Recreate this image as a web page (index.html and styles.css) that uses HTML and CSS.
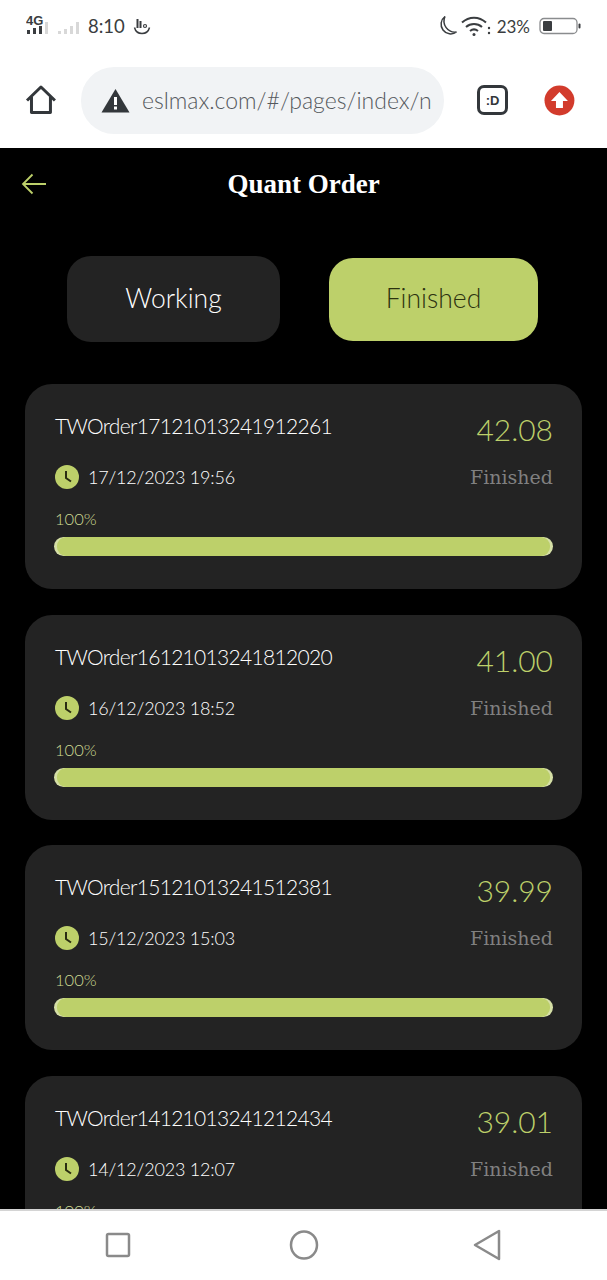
FILE: index.html
```html
<!DOCTYPE html>
<html lang="en">
<head>
    <meta charset="UTF-8">
    <meta name="viewport" content="width=device-width, initial-scale=1.0">
    <title>Quant Order</title>
    <link rel="stylesheet" href="styles.css">
</head>
<body>
    <div class="phone">
        <div class="status-bar">
            <div class="status-left">
                <svg class="signal" width="56" height="26" viewBox="0 0 56 26">
                    <text x="0" y="12" class="signal-label">4G</text>
                    <g fill="#3a3d40">
                        <rect x="1" y="17" width="3" height="4"/>
                        <rect x="7" y="15" width="3" height="6"/>
                        <rect x="13" y="13" width="3" height="8"/>
                    </g>
                    <g fill="#d8d8d8">
                        <rect x="19" y="9" width="3" height="12"/>
                        <rect x="32" y="18" width="3" height="3"/>
                        <rect x="38" y="16" width="3" height="5"/>
                        <rect x="44" y="13" width="3" height="8"/>
                        <rect x="50" y="9" width="3" height="12"/>
                    </g>
                </svg>
                <span class="clock">8:10</span>
                <svg width="18" height="18" viewBox="0 0 18 18" fill="none" stroke="#3a3d40">
                    <path d="M1.500 10.500c1 4 4 6 7.500 6s6.500-2 7.500-6" stroke-width="1.500"/>
                    <path d="M4.500 2v9M7.500 4v7" stroke-width="2"/>
                    <circle cx="12" cy="9" r="1.500" stroke-width="1.200"/>
                </svg>
            </div>
            <div class="status-right">
                <svg width="22" height="24" viewBox="0 0 22 24" fill="none" stroke="#3a3d40" stroke-width="1.500">
                    <path d="M9 2.500a9.500 9.500 0 1 0 11.500 15.500A11 11 0 0 1 9 2.500z"/>
                </svg>
                <svg width="30" height="22" viewBox="0 0 30 22" fill="none" stroke="#3a3d40" stroke-width="2">
                    <path d="M1 7.500c7-6.500 17-6.500 24 0"/>
                    <path d="M5 12c4.500-4 11.500-4 16 0"/>
                    <path d="M9 16c2.500-2 5.500-2 8 0"/>
                    <circle cx="13" cy="19.500" r="1.500" fill="#3a3d40" stroke="none"/>
                    <circle cx="28" cy="13" r="1.200" fill="#3a3d40" stroke="none"/>
                    <circle cx="28" cy="18" r="1.200" fill="#3a3d40" stroke="none"/>
                </svg>
                <span class="battery-text">23%</span>
                <svg width="42" height="18" viewBox="0 0 42 18">
                    <rect x="1" y="1.500" width="37" height="15" rx="4" fill="none" stroke="#8a8c8e" stroke-width="1.300"/>
                    <rect x="4" y="4" width="9" height="10" rx="1" fill="#3a3d40"/>
                    <rect x="39.500" y="6.500" width="2" height="5" rx="1" fill="#3a3d40"/>
                </svg>
            </div>
        </div>

        <div class="browser-bar">
            <svg class="home-icon" width="32" height="32" viewBox="0 0 32 32" fill="none" stroke="#33373b" stroke-width="3" stroke-linejoin="round">
                <path d="M2 16.500 16 3l14 13.500M6.500 13v15.500h19V13"/>
            </svg>
            <div class="url-pill">
                <svg width="29" height="25" viewBox="0 0 29 25">
                    <path d="M14.500 1 28.500 24.500H.5z" fill="#33373b"/>
                    <rect x="13" y="9" width="3" height="8" fill="#fff"/>
                    <rect x="13" y="18.500" width="3" height="3" fill="#fff"/>
                </svg>
                <span class="url-text">eslmax.com/#/pages/index/n</span>
            </div>
            <div class="tab-count">:D</div>
            <svg class="update-icon" width="31" height="31" viewBox="0 0 31 31">
                <circle cx="15.500" cy="15.500" r="15" fill="#d23b2c"/>
                <path d="M15.500 7 24 16h-5v7h-7v-7H7z" fill="#fff"/>
            </svg>
        </div>

        <main class="page">
            <header class="page-header">
                <svg class="back-icon" width="26" height="22" viewBox="0 0 26 22" fill="none" stroke="#bdd06a" stroke-width="1.800">
                    <path d="M25 11H2M11.500 1.500 2 11l9.500 9.500"/>
                </svg>
                <h1>Quant Order</h1>
            </header>

            <div class="tabs">
                <div class="tab">Working</div>
                <div class="tab tab-active">Finished</div>
            </div>

            <div class="order-list">
                <section class="order-card">
                    <div class="order-top">
                        <span class="order-id">TWOrder17121013241912261</span>
                        <span class="order-amount">42.08</span>
                    </div>
                    <div class="order-mid">
                        <span class="order-date">
                            <svg class="clock-icon" width="24" height="24" viewBox="0 0 24 24"><circle cx="12" cy="12" r="12" fill="#bdd06a"/><path d="M11 6v7l5 3.500" fill="none" stroke="#2a2d12" stroke-width="2"/></svg>
                            17/12/2023 19:56
                        </span>
                        <span class="order-status">Finished</span>
                    </div>
                    <div class="order-percent">100%</div>
                    <div class="progress"><div class="progress-fill"></div></div>
                </section>

                <section class="order-card">
                    <div class="order-top">
                        <span class="order-id">TWOrder16121013241812020</span>
                        <span class="order-amount">41.00</span>
                    </div>
                    <div class="order-mid">
                        <span class="order-date">
                            <svg class="clock-icon" width="24" height="24" viewBox="0 0 24 24"><circle cx="12" cy="12" r="12" fill="#bdd06a"/><path d="M11 6v7l5 3.500" fill="none" stroke="#2a2d12" stroke-width="2"/></svg>
                            16/12/2023 18:52
                        </span>
                        <span class="order-status">Finished</span>
                    </div>
                    <div class="order-percent">100%</div>
                    <div class="progress"><div class="progress-fill"></div></div>
                </section>

                <section class="order-card">
                    <div class="order-top">
                        <span class="order-id">TWOrder15121013241512381</span>
                        <span class="order-amount">39.99</span>
                    </div>
                    <div class="order-mid">
                        <span class="order-date">
                            <svg class="clock-icon" width="24" height="24" viewBox="0 0 24 24"><circle cx="12" cy="12" r="12" fill="#bdd06a"/><path d="M11 6v7l5 3.500" fill="none" stroke="#2a2d12" stroke-width="2"/></svg>
                            15/12/2023 15:03
                        </span>
                        <span class="order-status">Finished</span>
                    </div>
                    <div class="order-percent">100%</div>
                    <div class="progress"><div class="progress-fill"></div></div>
                </section>

                <section class="order-card">
                    <div class="order-top">
                        <span class="order-id">TWOrder14121013241212434</span>
                        <span class="order-amount">39.01</span>
                    </div>
                    <div class="order-mid">
                        <span class="order-date">
                            <svg class="clock-icon" width="24" height="24" viewBox="0 0 24 24"><circle cx="12" cy="12" r="12" fill="#bdd06a"/><path d="M11 6v7l5 3.500" fill="none" stroke="#2a2d12" stroke-width="2"/></svg>
                            14/12/2023 12:07
                        </span>
                        <span class="order-status">Finished</span>
                    </div>
                    <div class="order-percent">100%</div>
                    <div class="progress"><div class="progress-fill"></div></div>
                </section>
            </div>
        </main>

        <nav class="nav-bar">
            <svg width="26" height="26" viewBox="0 0 26 26" fill="none" stroke="#8a8a8a" stroke-width="2.500" stroke-linejoin="round"><rect x="2" y="2" width="22" height="22" rx="1.500"/></svg>
            <svg class="nav-home" width="30" height="30" viewBox="0 0 30 30" fill="none" stroke="#8a8a8a" stroke-width="2.500"><ellipse cx="15" cy="15" rx="13" ry="13.500"/></svg>
            <svg width="30" height="32" viewBox="0 0 30 32" fill="none" stroke="#8a8a8a" stroke-width="2.500" stroke-linejoin="round"><path d="M26 2v28L2 16z"/></svg>
        </nav>
    </div>
</body>
</html>
```

FILE: styles.css
```css
:root {
    --accent: #bdd06a;
    --card: #232323;
    --chrome-text: #3a3d40;
}

* {
    box-sizing: border-box;
}

body {
    margin: 0;
    background-color: #000;
    font-family: Lato, "Liberation Sans", sans-serif;
}

.phone {
    display: flex;
    flex-direction: column;
    height: 1280px;
    overflow: hidden;
}

.status-bar {
    display: flex;
    justify-content: space-between;
    align-items: center;
    height: 52px;
    padding: 0 26px;
    background-color: #fff;
    color: var(--chrome-text);
}

.status-left, .status-right {
    display: flex;
    align-items: center;
}

.signal-label {
    font-family: "Liberation Sans", sans-serif;
    font-size: 13px;
    font-weight: 700;
    fill: #3a3d40;
}

.clock {
    margin: 0 8px 0 6px;
    font-size: 18.5px;
}

.status-right {
    gap: 3px;
}

.battery-text {
    margin: 0 6px 0 3px;
    font-size: 17px;
}

.browser-bar {
    display: flex;
    align-items: center;
    height: 96px;
    padding: 0 32px 0 25px;
    background-color: #fff;
}

.url-pill {
    display: flex;
    align-items: center;
    gap: 12px;
    width: 364px;
    height: 67px;
    margin-left: 24px;
    padding-left: 20px;
    border-radius: 33px;
    background-color: #f1f3f5;
    white-space: nowrap;
    overflow: hidden;
}

.url-text {
    font-size: 23px;
    font-weight: 300;
    color: #55595d;
}

.tab-count {
    display: flex;
    justify-content: center;
    align-items: center;
    width: 31px;
    height: 30px;
    margin-left: 33px;
    border: 3px solid #33373b;
    border-radius: 7px;
    font-family: "Liberation Sans", sans-serif;
    font-size: 13px;
    font-weight: 700;
    color: #33373b;
}

.update-icon {
    margin-left: 36px;
}

.page {
    flex: 1;
    min-height: 0;
    overflow: hidden;
}

.page-header {
    display: grid;
    grid-template-columns: 1fr auto 1fr;
    align-items: center;
    height: 72px;
}

.page-header h1 {
    grid-column: 2;
    grid-row: 1;
    margin: 0;
    font-family: "Liberation Serif", serif;
    font-size: 27px;
    font-weight: 700;
    color: #fff;
}

.back-icon {
    grid-column: 1;
    grid-row: 1;
    margin-left: 21px;
}

.tabs {
    display: flex;
    align-items: center;
    gap: 49px;
    margin-top: 36px;
    padding-left: 67px;
}

.tab {
    display: flex;
    justify-content: center;
    align-items: center;
    width: 213px;
    height: 86px;
    padding-bottom: 2px;
    border-radius: 24px;
    background-color: var(--card);
    font-size: 26.5px;
    font-weight: 300;
    color: #fff;
}

.tab-active {
    width: 209px;
    height: 83px;
    background-color: var(--accent);
    color: #2c3210;
}

.order-list {
    display: flex;
    flex-direction: column;
    gap: 25.6px;
    margin: 42px 25px 0;
}

.order-card {
    flex-shrink: 0;
    height: 205px;
    padding: 24px 29px 0;
    border-radius: 27px;
    background-color: var(--card);
}

.order-top, .order-mid {
    display: flex;
    justify-content: space-between;
    align-items: center;
}

.order-top {
    height: 44px;
}

.order-mid {
    height: 50px;
}

.order-id {
    margin: 0 0 9px 1px;
    font-size: 21px;
    font-weight: 300;
    letter-spacing: -0.7px;
    color: #fff;
}

.order-amount {
    margin-bottom: 2px;
    font-size: 30px;
    font-weight: 300;
    color: var(--accent);
}

.order-date {
    display: flex;
    align-items: center;
    gap: 9px;
    margin-left: 1px;
    font-size: 18px;
    font-weight: 300;
    letter-spacing: -0.2px;
    color: #fff;
}

.clock-icon {
    flex-shrink: 0;
}

.order-status {
    font-family: "DejaVu Serif", serif;
    font-size: 19px;
    color: #808080;
}

.order-percent {
    height: 24px;
    margin: 7px 0 0 1px;
    font-size: 16.5px;
    font-weight: 300;
    color: #cfdc93;
}

.progress {
    height: 19px;
    margin-top: 4px;
    padding: 0 3px;
    border-radius: 10px;
    background-color: #d5dfa6;
}

.progress-fill {
    width: 100%;
    height: 100%;
    border-radius: 9px;
    background-color: var(--accent);
}

.nav-bar {
    display: flex;
    flex-shrink: 0;
    align-items: center;
    height: 71px;
    padding: 0 0 2px 105px;
    border-top: 2px solid #d4d4d4;
    background-color: #fff;
}

.nav-home {
    margin: 0 154px 0 158px;
}
```
